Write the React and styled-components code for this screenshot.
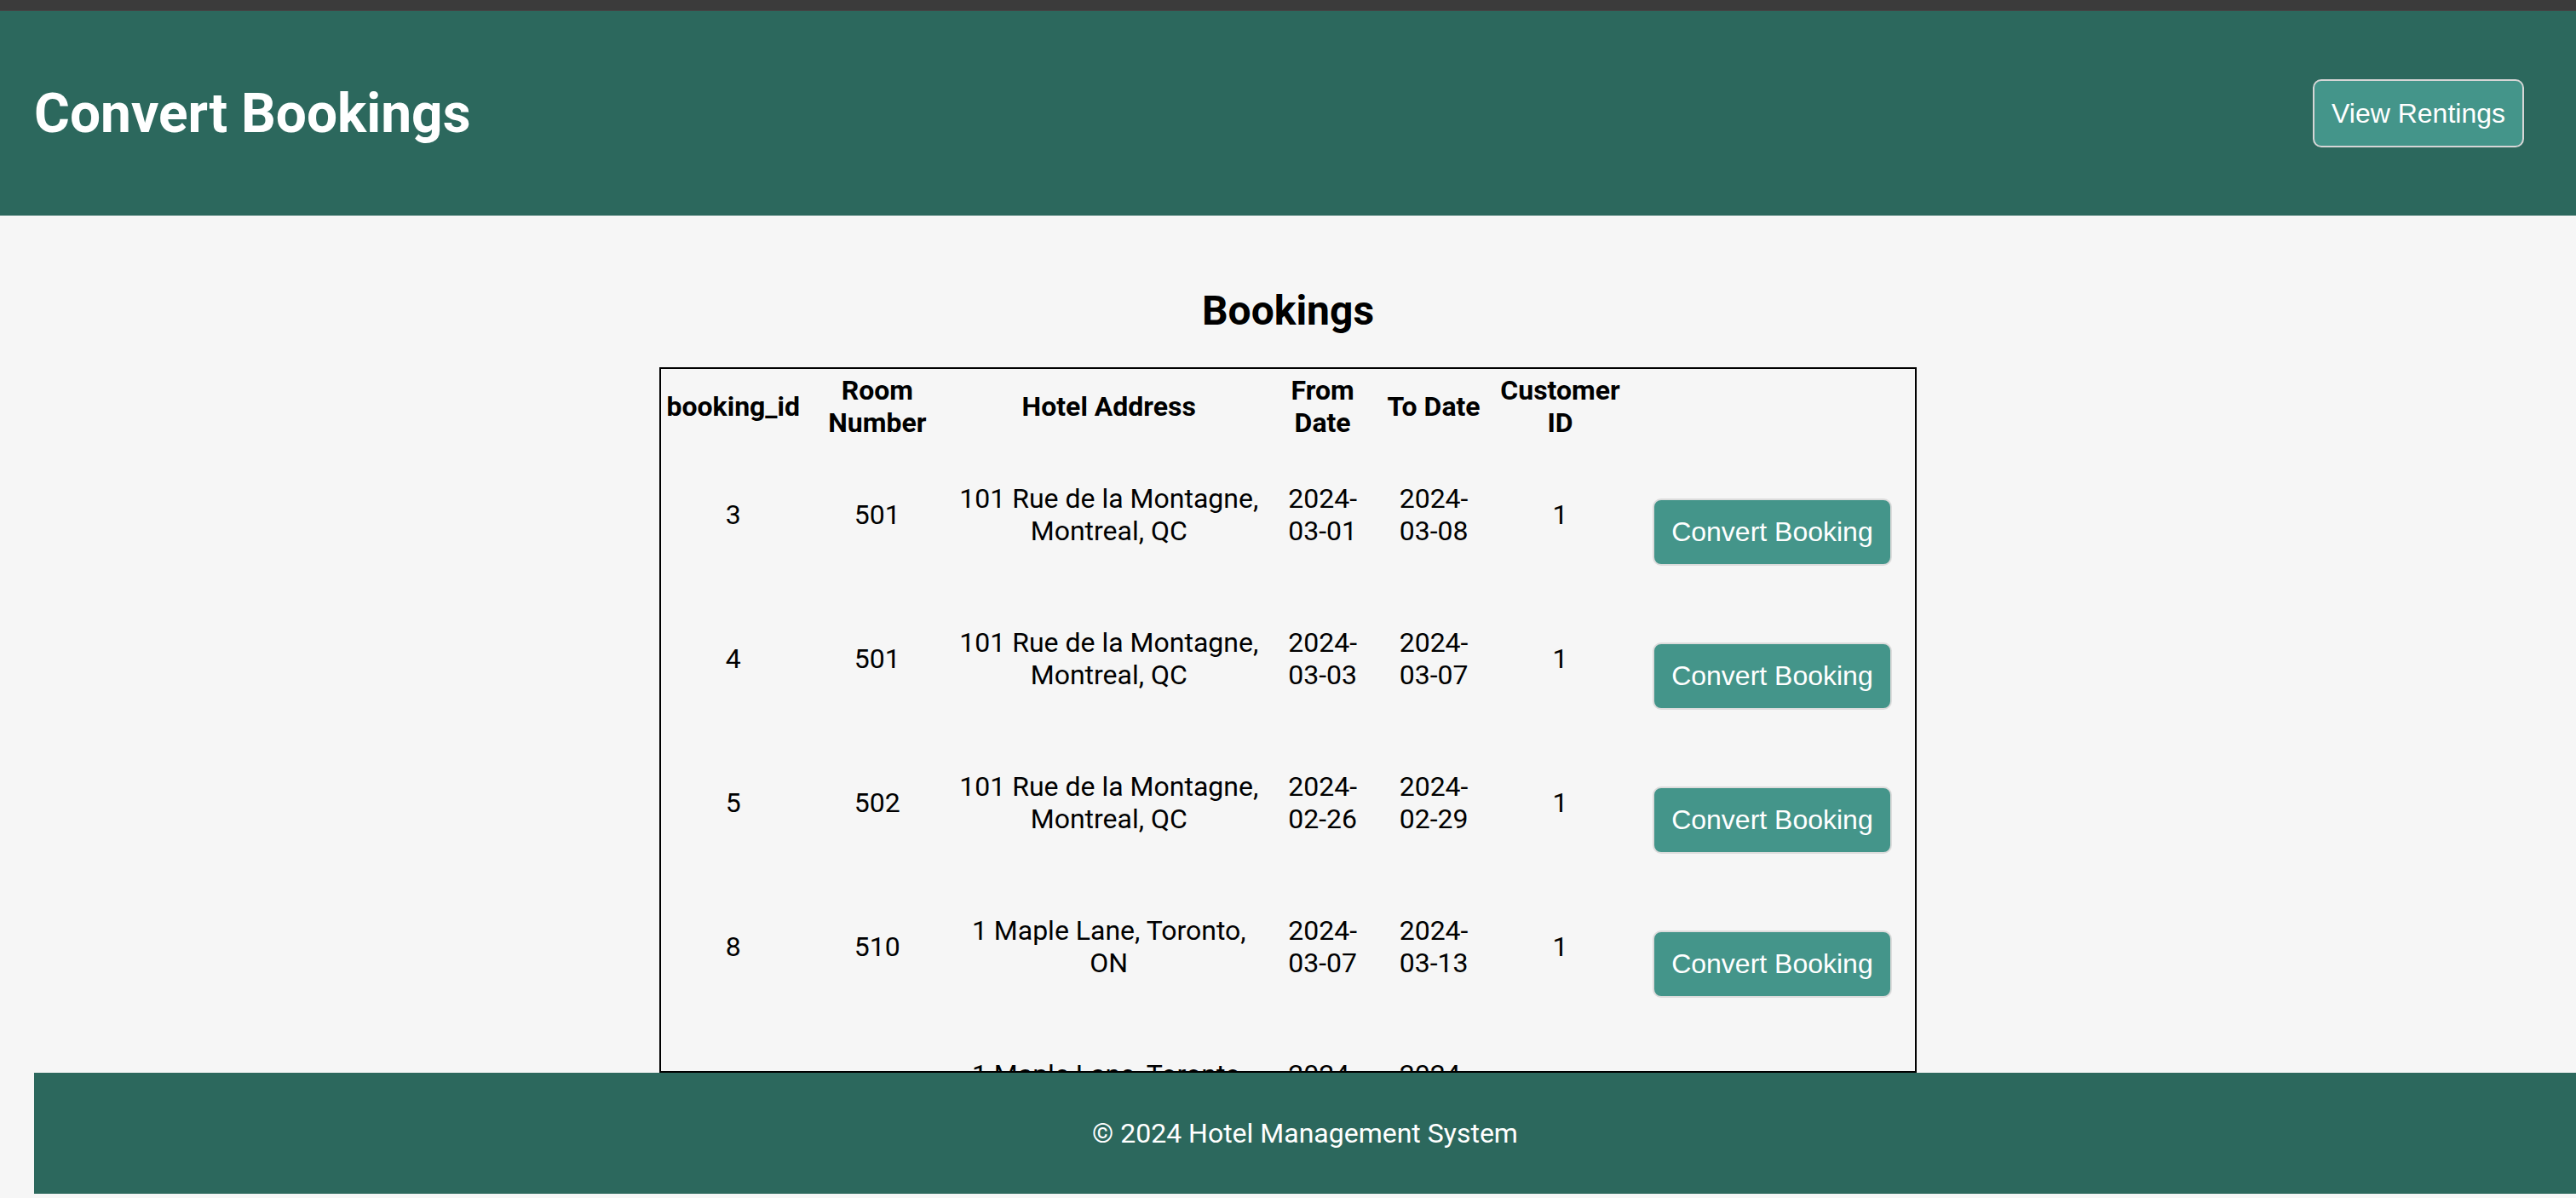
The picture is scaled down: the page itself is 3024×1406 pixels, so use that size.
import React from 'react'
import styled, { createGlobalStyle } from 'styled-components'

const GlobalStyle = createGlobalStyle`
  html, body {
    margin: 0;
    padding: 0;
    background: #f6f6f6;
    font-family: Roboto, "Liberation Sans", sans-serif;
    color: #000;
  }
`

const bookings = [
  { id: 3, room: 501, address: '101 Rue de la Montagne, Montreal, QC', from: '2024-03-01', to: '2024-03-08', customer: 1 },
  { id: 4, room: 501, address: '101 Rue de la Montagne, Montreal, QC', from: '2024-03-03', to: '2024-03-07', customer: 1 },
  { id: 5, room: 502, address: '101 Rue de la Montagne, Montreal, QC', from: '2024-02-26', to: '2024-02-29', customer: 1 },
  { id: 8, room: 510, address: '1 Maple Lane, Toronto, ON', from: '2024-03-07', to: '2024-03-13', customer: 1 },
  { id: 9, room: 511, address: '1 Maple Lane, Toronto, ON', from: '2024-03-15', to: '2024-03-20', customer: 2 },
]

// column widths measured from the layout (px, padding included)
const columns = [161, 168, 366, 126, 126, 162, 326]

const App = () => {
  return (
    <Page>
      <GlobalStyle />
      <TopBar />
      <Header>
        <Title>Convert Bookings</Title>
        <NavButton>View Rentings</NavButton>
      </Header>
      <Main>
        <Heading>Bookings</Heading>
        <TableFrame>
          <Table>
            <colgroup>
              {columns.map((w, i) => (
                <col key={i} style={{ width: w }} />
              ))}
            </colgroup>
            <thead>
              <tr>
                <Th>booking_id</Th>
                <Th>Room Number</Th>
                <Th>Hotel Address</Th>
                <Th>From Date</Th>
                <Th>To Date</Th>
                <Th>Customer ID</Th>
                <Th></Th>
              </tr>
            </thead>
            <tbody>
              {bookings.map((b) => (
                <tr key={b.id}>
                  <Td>{b.id}</Td>
                  <Td>{b.room}</Td>
                  <Td>{b.address}</Td>
                  <Td>{b.from}</Td>
                  <Td>{b.to}</Td>
                  <Td>{b.customer}</Td>
                  <Td>
                    <ActionButton>Convert Booking</ActionButton>
                  </Td>
                </tr>
              ))}
            </tbody>
          </Table>
        </TableFrame>
      </Main>
      <Footer>© 2024 Hotel Management System</Footer>
    </Page>
  )
}

const Page = styled.div`
  display: flex;
  flex-direction: column;
  height: 100vh;
  overflow: hidden;
`

const TopBar = styled.div`
  height: 12px;
  background: #3b3b3b;
  border-bottom: 1px solid #454545;
  flex-shrink: 0;
`

const Header = styled.header`
  height: 240px;
  flex-shrink: 0;
  display: flex;
  align-items: center;
  justify-content: space-between;
  padding: 0 61px 0 40px;
  background: #2c685d;
`

const Title = styled.h1`
  margin: 0;
  font-size: 64px;
  font-weight: 700;
  color: #fff;
`

const NavButton = styled.button`
  font-family: "Liberation Sans", Arial, sans-serif;
  font-size: 32px;
  line-height: 36px;
  color: #fff;
  background: #44958a;
  border: 2px solid #d6d6d6;
  border-radius: 10px;
  padding: 20px 20px;
  cursor: pointer;
`

const Main = styled.main`
  flex: 1;
  min-height: 0;
  display: flex;
  flex-direction: column;
  align-items: center;
  padding: 83px 40px 0;
`

const Heading = styled.h2`
  margin: 0 0 38px;
  font-size: 48px;
  font-weight: 700;
`

const TableFrame = styled.div`
  flex: 1;
  min-height: 0;
  width: 1476px;
  box-sizing: border-box;
  border: 2px solid #000;
  overflow: hidden;
`

const Table = styled.table`
  width: 100%;
  table-layout: fixed;
  border-collapse: separate;
  border-spacing: 4px;
`

const Th = styled.th`
  padding: 2px;
  font-size: 32px;
  font-weight: 700;
  text-align: center;
  vertical-align: middle;
`

const Td = styled.td`
  padding: 22px 2px;
  font-size: 32px;
  text-align: center;
  vertical-align: middle;
`

const ActionButton = styled.button`
  margin-top: 42px;
  font-family: "Liberation Sans", Arial, sans-serif;
  font-size: 32px;
  line-height: 35px;
  color: #fff;
  background: #44958a;
  border: 2px solid #dcdcdc;
  border-radius: 10px;
  padding: 20px 20px;
  cursor: pointer;
`

const Footer = styled.footer`
  flex-shrink: 0;
  height: 142px;
  margin: 0 0 5px 40px;
  display: flex;
  align-items: center;
  justify-content: center;
  background: #2c685d;
  color: #fff;
  font-size: 32px;
`

export default App
